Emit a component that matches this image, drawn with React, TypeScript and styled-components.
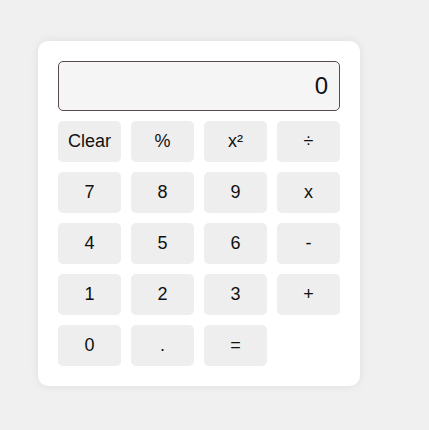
import React from "react";
import styled, { createGlobalStyle } from "styled-components";

const Global = createGlobalStyle`
  html, body { margin: 0; padding: 0; background: #f0f0f0; }
  body { font-family: "Liberation Sans", Arial, sans-serif; }
`;

const Page = styled.div`
  padding: 41px 0 0 38px;
  min-height: 430px;
  box-sizing: border-box;
`;

const Card = styled.div`
  width: 322px;
  box-sizing: border-box;
  background: #ffffff;
  border-radius: 10px;
  padding: 20px;
  box-shadow: 0 0 10px rgba(0, 0, 0, 0.08);
  display: flex;
  flex-direction: column;
  gap: 10px;
`;

const Display = styled.div`
  height: 50px;
  box-sizing: border-box;
  border: 1px solid #5a4a4a;
  border-radius: 5px;
  background: #f6f5f5;
  display: flex;
  align-items: center;
  justify-content: flex-end;
  padding: 0 11px;
  font-size: 24px;
  color: #111;
`;

const Grid = styled.div`
  display: grid;
  grid-template-columns: repeat(4, 63px);
  grid-auto-rows: 41px;
  gap: 10px;
`;

const Key = styled.button`
  border: none;
  border-radius: 5px;
  background: #eeeeee;
  font-family: "Liberation Sans", Arial, sans-serif;
  font-size: 18px;
  color: #111;
  padding: 0;
  display: flex;
  align-items: center;
  justify-content: center;
`;

const keys = ["Clear", "%", "x²", "÷", "7", "8", "9", "x", "4", "5", "6", "-", "1", "2", "3", "+", "0", ".", "="];

export default function App() {
  return (
    <>
      <Global />
      <Page>
        <Card>
          <Display>0</Display>
          <Grid>
            {keys.map((k) => (
              <Key key={k}>{k}</Key>
            ))}
          </Grid>
        </Card>
      </Page>
    </>
  );
}
